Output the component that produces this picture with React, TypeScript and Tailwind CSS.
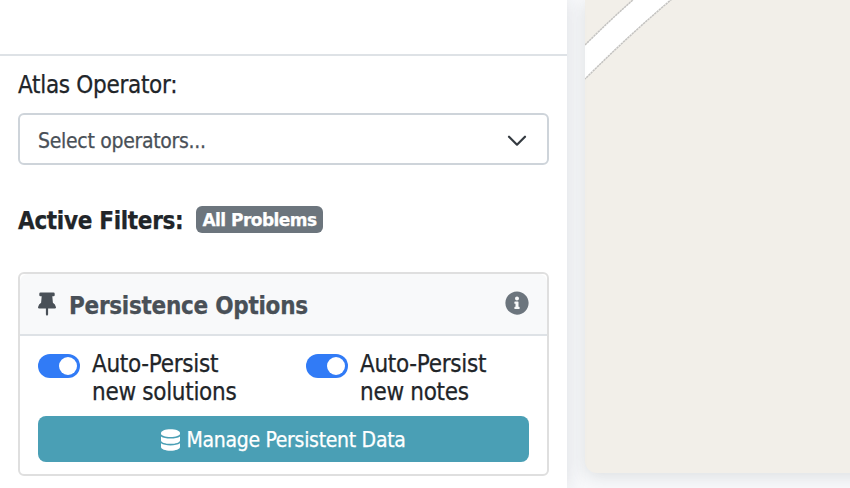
import { FaInfoCircle } from "react-icons/fa";

const sans = "font-['DejaVu_Sans_Condensed','DejaVu_Sans',sans-serif] [font-stretch:condensed] [-webkit-text-stroke:0.25px_currentColor]";
const wide = "font-['DejaVu_Sans',sans-serif] [font-stretch:normal]";

function PinIcon() {
  return (
    <svg className="h-6 w-[18px]" viewBox="0 0 18 24" fill="currentColor">
      <path d="M2.5 0.5H15.5Q16.7 0.5 16.7 1.7V3.2Q16.7 4.3 15.5 4.3H14.3L14.9 10.7Q17.3 12.1 18 15.2Q18.1 16.6 16.8 16.6H10.1V22.4L9 24L7.9 22.4V16.6H1.2Q-0.1 16.6 0 15.2Q0.7 12.1 3.1 10.7L3.7 4.3H2.5Q1.3 4.3 1.3 3.2V1.7Q1.3 0.5 2.5 0.5Z" />
    </svg>
  );
}

function DatabaseIcon() {
  return (
    <svg className="mt-[1px] mr-[6px] h-[22px] w-[19px]" viewBox="0 0 19 22" fill="currentColor">
      <path d="M9.5 0.3C14.7 0.3 19 1.9 19 4.1V4.8C19 6.6 14.7 8.1 9.5 8.1S0 6.6 0 4.8V4.1C0 1.9 4.3 0.3 9.5 0.3Z" />
      <path d="M0 7.4C2 8.8 5.5 9.5 9.5 9.5S17 8.8 19 7.4V11.4C19 13.3 14.7 14.8 9.5 14.8S0 13.3 0 11.4Z" />
      <path d="M0 14.3C2 15.7 5.5 16.4 9.5 16.4S17 15.7 19 14.3V18C19 20.1 14.7 21.7 9.5 21.7S0 20.1 0 18Z" />
    </svg>
  );
}

function PersistSwitch({ topic }: { topic: string }) {
  return (
    <label className="flex w-[268px] shrink-0 items-start">
      <span className="mt-1 flex h-6 w-[42px] shrink-0 items-center justify-end rounded-full bg-[#317bf6] pr-[3px]">
        <span className="size-[18px] rounded-full bg-white" />
      </span>
      <span className="ml-3 whitespace-nowrap text-[24px] leading-7 tracking-[-0.3px]">
        <span className="block">Auto-Persist</span>
        <span className="block">{topic}</span>
      </span>
    </label>
  );
}

export default function App() {
  return (
    <div className={`flex h-[488px] w-[850px] overflow-hidden bg-[#f8f9fb] text-[#212529] ${sans}`}>
      <aside className="relative z-10 h-full w-[567px] shrink-0 bg-white shadow-[0_0_20px_rgba(30,40,55,0.13)]">
        <div className="h-14 border-b-2 border-[#dee2e6]" />
        <div className="px-[18px]">
          <div className="pt-[13px] text-[24px] leading-8 tracking-[-0.3px]">Atlas Operator:</div>
          <div className="mt-3 flex h-[52px] w-[531px] items-center justify-between rounded-[6px] border-2 border-[#ced4da] pr-5 pl-[18px]">
            <span className="pt-[3px] text-[21px] leading-7 tracking-[-0.3px] text-[#495057]">Select operators...</span>
            <svg className="mt-[3px] size-5" viewBox="0 0 20 20" fill="none" stroke="#343a40" strokeWidth="2.2" strokeLinecap="round" strokeLinejoin="round">
              <path d="M2 5.7 10 13.7 18 5.7" />
            </svg>
          </div>
          <div className="mt-[39px] flex h-8 items-center">
            <b className="w-[178px] whitespace-nowrap pt-[2px] text-[24px] tracking-[-0.32px]">Active Filters:</b>
            <span className={`mt-[-1px] flex h-[27px] w-[127px] items-center justify-center whitespace-nowrap rounded-[6px] bg-[#6c757d] pt-[2px] text-[17px] font-bold tracking-[-0.54px] text-white ${wide}`}>
              All Problems
            </span>
          </div>
          <section className="mt-9 h-[204px] w-[531px] rounded-[6px] border-2 border-[#dfdfdf]">
            <header className="flex h-[62px] items-center rounded-t-[8px] border-b-2 border-[#dee2e6] bg-[#f8f9fa] px-[18px] text-[#495057]">
              <PinIcon />
              <b className="ml-[13px] whitespace-nowrap pt-[3px] text-[24px] tracking-[-0.28px]">Persistence Options</b>
              <FaInfoCircle className="mb-[2px] ml-auto size-6 text-[#6c757d]" />
            </header>
            <div className="px-[18px] pt-[14px]">
              <div className="flex">
                <PersistSwitch topic="new solutions" />
                <PersistSwitch topic="new notes" />
              </div>
              <button className="mt-[10px] flex h-[46px] w-[491px] items-center justify-center rounded-[8px] bg-[#4a9fb5] text-[21px] tracking-[-0.29px] text-white">
                <DatabaseIcon />
                <span className="pt-[3px]">Manage Persistent Data</span>
              </button>
            </div>
          </section>
        </div>
      </aside>
      <main className="ml-[18px] h-[473px] w-[300px] shrink-0 rounded-bl-[12px] bg-[#f2efe9] shadow-[0_4px_16px_rgba(30,50,50,0.12)]">
        <svg className="h-[100px] w-[265px]" viewBox="0 0 265 100">
          <path d="M0 45 Q24 21 49 -1 L87 -1 Q43 36 0 79Z" fill="white" />
          <path d="M0 45 Q24 21 49 -1 M87 -1 Q43 36 0 79" fill="none" stroke="#c4c3c1" strokeWidth="1.5" strokeDasharray="2.4 .6" />
        </svg>
      </main>
    </div>
  );
}
